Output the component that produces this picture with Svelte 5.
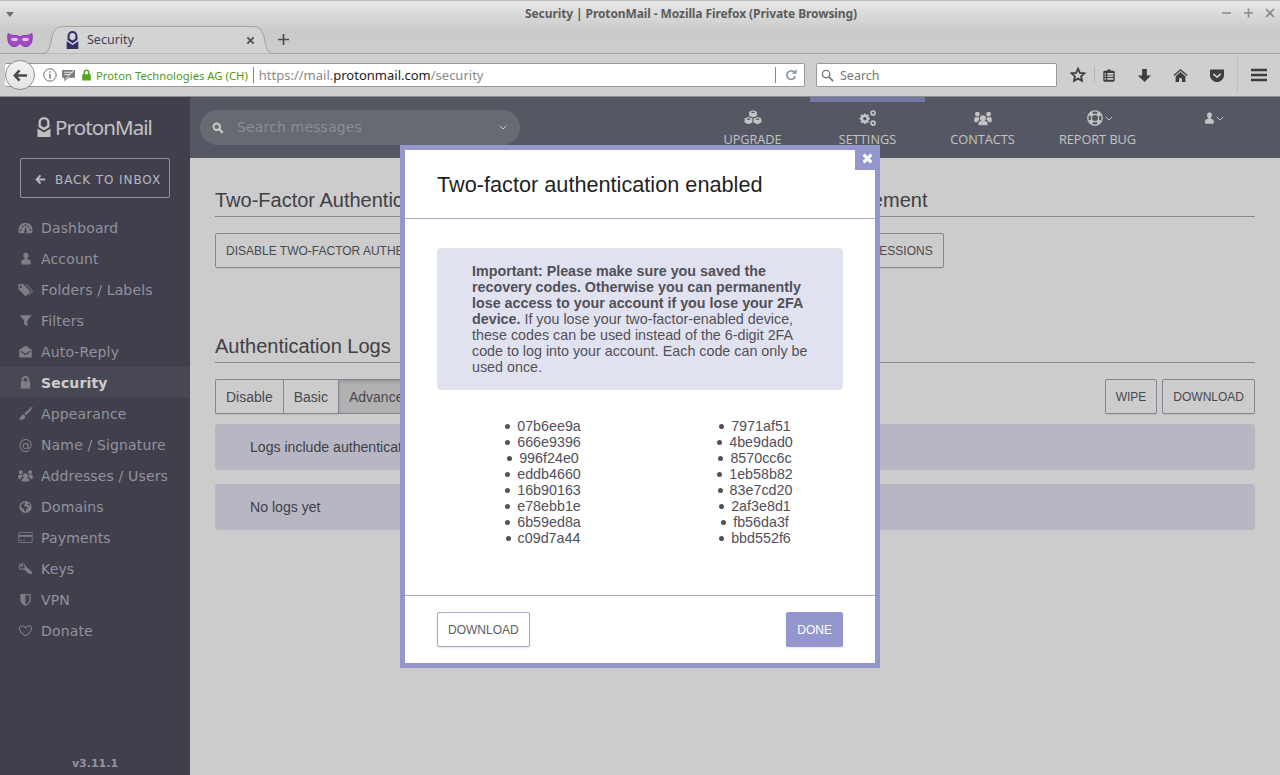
<script>
  const nav = [
    { label: 'Dashboard', icon: 'dash' },
    { label: 'Account', icon: 'user' },
    { label: 'Folders / Labels', icon: 'tags' },
    { label: 'Filters', icon: 'filter' },
    { label: 'Auto-Reply', icon: 'mail' },
    { label: 'Security', icon: 'lock', active: true },
    { label: 'Appearance', icon: 'brush' },
    { label: 'Name / Signature', icon: 'at' },
    { label: 'Addresses / Users', icon: 'users' },
    { label: 'Domains', icon: 'globe' },
    { label: 'Payments', icon: 'card' },
    { label: 'Keys', icon: 'key' },
    { label: 'VPN', icon: 'shield' },
    { label: 'Donate', icon: 'heart' }
  ];
  const icons = {
    dash: 'M8 3a7.5 7.5 0 0 0-7.5 7.5c0 1.3.3 2.5.9 3.5h13.2c.6-1 .9-2.2.9-3.5A7.5 7.5 0 0 0 8 3zM3 9.5a1 1 0 1 1 0 2 1 1 0 0 1 0-2zM5 6a1 1 0 1 1 0 2 1 1 0 0 1 0-2zM8 4.5a1 1 0 1 1 0 2 1 1 0 0 1 0-2zM11 6a1 1 0 1 1 0 2 1 1 0 0 1 0-2zM13 9.5a1 1 0 1 1 0 2 1 1 0 0 1 0-2zM7.6 8h.8l.5 3.3a1.4 1.4 0 1 1-1.8 0z',
    user: 'M8 1.5a3.2 3.2 0 0 1 3.2 3.6c-.1 1.4-.8 2.6-1.7 3.1l3 1.5c.7.4 1 1 1 1.8v2c0 .6-.4 1-1 1H4.5c-.6 0-1-.4-1-1v-2c0-.8.3-1.4 1-1.8l3-1.5c-.9-.5-1.6-1.7-1.7-3.1A3.2 3.2 0 0 1 8 1.5z',
    tags: 'M.5 2.5h5.2l7 7c.4.4.4 1 0 1.4l-3.8 3.8c-.4.4-1 .4-1.4 0l-7-7zM3 4a1.2 1.2 0 1 0 0 2.4A1.2 1.2 0 0 0 3 4zM8 2.5h1.3l6.2 6.6c.4.4.4 1 0 1.4l-3.8 4-.6-.6 3.2-3.4c.4-.4.4-1 0-1.4z',
    filter: 'M2 2.5h12.5L10 8v6.5L6.5 12V8z',
    mail: 'M8 1.5l6.7 5v7.3c0 .4-.3.7-.7.7H2c-.4 0-.7-.3-.7-.7V6.500zM3 7.200l-.7.9L8 12l5.700-3.900-.7-.9L8 10.500z',
    lock: 'M4 7V5a4 4 0 0 1 8 0v2h.5c.3 0 .5.200.5.500v6.500c0 .3-.200.500-.5.500h-9c-.3 0-.5-.200-.5-.500V7.500c0-.3.200-.500.500-.500zM6 7h4V5a2 2 0 0 0-4 0z',
    brush: 'M15.500 .8c.3.300-.2 1.200-1 2.300C12.800 5.500 10 8.500 8.500 9.800L6.700 8.200C8 6.500 11 3.800 13.300 2 14.400 1.200 15.200.5 15.500.8zM6 9l1.800 1.600c0 2.400-1.500 4-4 4-1.300 0-2.400-.5-3.300-1.400 1.200 0 1.800-.3 2.200-1.300C3.300 10.500 4.500 9.300 6 9z',
    users: 'M8 5.500a2.600 2.600 0 0 1 2.600 2.700c0 1-.5 1.800-1.200 2.200l2.100 1c.4.200.6.600.6 1v1.300c0 .4-.3.700-.7.700H4.600c-.4 0-.7-.3-.7-.7v-1.300c0-.4.2-.8.6-1l2.100-1A2.600 2.600 0 0 1 8 5.500zM3 2.500a2.100 2.100 0 1 1 0 4.200 2.100 2.100 0 0 1 0-4.200zM13 2.500a2.100 2.100 0 1 1 0 4.200 2.100 2.100 0 0 1 0-4.200zM.3 8.300c0-.5.4-1 1-1H4.700c-.3.700-.2 1.700.2 2.400-1 .4-1.800 1-2 2H1c-.4 0-.7-.3-.7-.7zM15.700 8.300c0-.5-.4-1-1-1H11.300c.3.700.2 1.700-.2 2.400 1 .4 1.800 1 2 2H15c.4 0 .7-.3.7-.7z',
    globe: 'M8 2a6.500 6.500 0 1 1 0 13A6.500 6.500 0 0 1 8 2zM4 5.500c-.6.800-1 1.700-1 2.800l2.500 2 1 .2v2l1.500 1 .6-2 2-2-1.500-1.500H7L6 7l1.500-1.500V4C6 4 4.800 4.600 4 5.500zM11 4.500l-.8 1.500 1.800 1.300 1.200-.3C12.800 6 12 5 11 4.500z',
    card: 'M1.500 2.500h13c.6 0 1 .4 1 1v9c0 .6-.4 1-1 1h-13c-.6 0-1-.4-1-1v-9c0-.6.4-1 1-1zM1.300 3.300v1.900h13.400V3.300zM1.300 7.300v5.400h13.400V7.300zM2.500 10.800h2v.8h-2zM5.500 10.800h2v.8h-2z',
    key: 'M4.500 2.500a3.800 3.800 0 0 1 3.700 2.900L9 6.500l6.200 5.300-.3 1.800-1.300.2-.8-.7-.5.8-1-.2-.2-1-.8-.2L6.800 9c-.7.300-1.400.4-2.300.3A3.500 3.500 0 0 1 .8 6c0-2 1.700-3.500 3.700-3.500zM4 4a1 1 0 1 0 0 2.500A1 1 0 0 0 4 4zM4.500 3.500C3 3.500 1.800 4.600 1.800 6s1.200 2.300 2.700 2.300S7.200 7.200 7.200 5.900 6 3.500 4.500 3.500z',
    shield: 'M2.500 2h11v6.500c0 3-2.500 5-5.500 6.500-3-1.500-5.500-3.500-5.500-6.500zM8 3.500v10c2-1.200 4-2.600 4-5V3.500z',
    heart: 'M8 14.500C4.500 11.700 1 9 1 5.800 1 3.700 2.500 2.500 4.300 2.500 5.800 2.500 7.200 3.400 8 4.800 8.800 3.400 10.200 2.500 11.700 2.500 13.500 2.500 15 3.700 15 5.800c0 3.200-3.500 5.900-7 8.700zM8 13.300c3-2.400 6-4.800 6-7.500 0-1.500-1-2.400-2.300-2.400-1.500 0-2.900 1.200-3.700 3-.8-1.800-2.200-3-3.700-3C3 3.400 2 4.300 2 5.800c0 2.700 3 5.100 6 7.500z',
    cubes: 'M8 1l3.500 1.500V6L8 7.500 4.500 6V2.500zM4 7l3.500 1.500V12L4 13.500.5 12V8.500zM12 7l3.500 1.500V12L12 13.500 8.500 12V8.500zM8 2.200 6 3l2 .8 2-.8zM4 8.200 2 9l2 .8L6 9zM12 8.200 10 9l2 .8 2-.8z',
    gears: 'M6 5l1 .3.8-.7 1.200 1.200-.7.800.3 1 1.100.2v1.600l-1.100.2-.3 1 .7.800L8 12.600l-.8-.7-1 .3-.2 1.100H4.400l-.2-1.100-1-.3-.8.7L1.200 11.400l.7-.8-.3-1-1.100-.2V7.800l1.100-.2.3-1-.7-.8L2.400 4.600l.8.7 1-.3.2-1.100H6zM5.200 7a1.600 1.600 0 1 0 0 3.200 1.600 1.600 0 0 0 0-3.200zM12.500 1a2.500 2.500 0 1 1 0 5 2.500 2.500 0 0 1 0-5zM12.500 2.500a1 1 0 1 0 0 2 1 1 0 0 0 0-2zM12.500 10a2.500 2.500 0 1 1 0 5 2.500 2.500 0 0 1 0-5zM12.500 11.500a1 1 0 1 0 0 2 1 1 0 0 0 0-2z',
    ring: 'M8 1a7 7 0 1 1 0 14A7 7 0 0 1 8 1zM8 5.300a2.700 2.700 0 1 0 0 5.400 2.700 2.700 0 0 0 0-5.400zM5.700 2.600 6.400 4.500c1-.4 2.200-.4 3.200 0l.7-1.900a7 7 0 0 0-4.600 0zM5.700 13.400l.7-1.900c1 .4 2.200.4 3.200 0l.7 1.900a7 7 0 0 1-4.600 0zM2.600 5.700l1.900.7c-.4 1-.4 2.200 0 3.200l-1.900.7a7 7 0 0 1 0-4.600zM13.400 5.700l-1.900.7c.4 1 .4 2.200 0 3.200l1.900.7a7 7 0 0 0 0-4.600z'
  };
  const left = ['07b6ee9a','666e9396','996f24e0','eddb4660','16b90163','e78ebb1e','6b59ed8a','c09d7a44'];
  const right = ['7971af51','4be9dad0','8570cc6c','1eb58b82','83e7cd20','2af3e8d1','fb56da3f','bbd552f6'];
</script>

{#snippet icon(name, cls)}
  <svg class={cls} viewBox="0 0 16 16" aria-hidden="true"><path fill="currentColor" fill-rule="evenodd" d={icons[name]} /></svg>
{/snippet}

{#snippet chev()}
  <svg class="chev" viewBox="0 0 8 5" aria-hidden="true"><path d="M.7.8 4 4l3.300-3.200" fill="none" stroke="currentColor" stroke-width="1" /></svg>
{/snippet}

{#snippet proton(cls)}
  <svg class={cls} viewBox="0 0 14 20" aria-hidden="true"><path fill="currentColor" fill-rule="evenodd" d="M7 0a5.500 5.500 0 0 1 5.500 5.500V10l-5.500 3.500L1.500 10V5.500A5.500 5.500 0 0 1 7 0zM7 2.300A3.200 3.200 0 0 0 3.800 5.500V8.500L7 10.500l3.200-2V5.500A3.200 3.200 0 0 0 7 2.300zM.5 11.500 7 15.500l6.500-4V20H.5z" /></svg>
{/snippet}

<div class="window">
  <header class="browser">
    <div class="titlebar">
      <span class="menu-tri"></span>
      <span class="title">Security | ProtonMail - Mozilla Firefox (Private Browsing)</span>
      <div class="winctl">
        <svg viewBox="0 0 58 12" aria-hidden="true"><path d="M2 6h9M24 6h9M28.500 1.500v9M46 2l8 8M54 2l-8 8" stroke="#8b8b8b" stroke-width="1.600" fill="none" /></svg>
      </div>
    </div>
    <div class="tabbar">
      <svg class="mask" viewBox="0 0 26 16" aria-hidden="true">
        <path fill="#a04bc4" stroke="#7a2ea0" stroke-width=".8" d="M1 1.500c3 1.500 4 2 7 2 2.500 0 3.800.6 5 1.300 1.200-.7 2.500-1.300 5-1.300 3 0 4-.5 7-2 .6 5 .2 8-1 10-1.200 2-3.500 3.300-6 3-2-.2-3.200-1.500-5-3-1.800 1.500-3 2.800-5 3-2.500.3-4.800-1-6-3-1.200-2-1.600-5-1-10z" />
        <ellipse cx="7.500" cy="7.500" rx="3.400" ry="1.700" fill="#e3c4ef" />
        <ellipse cx="18.500" cy="7.500" rx="3.400" ry="1.700" fill="#e3c4ef" />
      </svg>
      <div class="tab">
        <svg class="tab-shape" viewBox="0 0 232 28" aria-hidden="true"><path d="M0 27.500c6 0 7-3 9-12C11 5 13 .5 22 .5h188c9 0 11 4.500 13 15 2 9 3 12 9 12" fill="#d3d3d3" stroke="#a2a2a2" /></svg>
        {@render proton('favicon')}
        <span class="tab-title">Security</span>
        <svg class="tab-x" viewBox="0 0 10 10" aria-hidden="true"><path d="M1.500 1.500l7 7M8.500 1.500l-7 7" stroke="#555" stroke-width="2.200" /></svg>
      </div>
      <svg class="plus" viewBox="0 0 14 14" aria-hidden="true"><path d="M7 1v12M1 7h12" stroke="#4a4a4a" stroke-width="1.800" /></svg>
    </div>
    <div class="navbar">
      <div class="urlbar">
        <div class="backbtn">
          <svg viewBox="0 0 16 14" aria-hidden="true"><path d="M7 1.500 2 7l5 5.500M2.500 7H15" fill="none" stroke="#4a4a4a" stroke-width="2.800" /></svg>
        </div>
        <svg class="u-info" viewBox="0 0 14 14" aria-hidden="true"><circle cx="7" cy="7" r="6.200" fill="none" stroke="#707070" /><path d="M7 6v4.500M7 3.200v1.600" stroke="#707070" stroke-width="1.400" /></svg>
        <svg class="u-msg" viewBox="0 0 16 14" aria-hidden="true"><path d="M1 1h14v8.500H8L3.500 13.500V9.500H1z" fill="#7c7c7c" /><path d="M3.500 3.500h9M3.500 6h6M14 1 5 11" stroke="#f4f4f4" stroke-width="1" /></svg>
        <svg class="u-lock" viewBox="0 0 12 14" aria-hidden="true"><path fill="#54a61e" fill-rule="evenodd" d="M2.500 6V4a3.500 3.500 0 0 1 7 0v2h1.500v7.500H1V6zM4.300 6h3.400V4a1.700 1.700 0 0 0-3.400 0z" /></svg>
        <span class="org">Proton Technologies AG (CH)</span>
        <span class="u-sep"></span>
        <span class="url"><span class="dim">https://mail.</span>protonmail.com<span class="dim">/security</span></span>
        <span class="u-sep2"></span>
        <svg class="u-reload" viewBox="0 0 14 14" aria-hidden="true"><path d="M11.500 4.500A5 5 0 1 0 12 8.500" fill="none" stroke="#8594a5" stroke-width="2" /><path d="M8 5.500h5.500V0z" fill="#8594a5" /></svg>
      </div>
      <div class="searchbar">
        <svg viewBox="0 0 14 14" aria-hidden="true"><circle cx="5.500" cy="5.500" r="4" fill="none" stroke="#7a7a7a" stroke-width="1.500" /><path d="M8.500 8.500l4.500 4.500" stroke="#7a7a7a" stroke-width="2" /></svg>
        <span>Search</span>
      </div>
      <div class="tools">
        <svg class="t-star" viewBox="0 0 16 16" aria-hidden="true"><path d="M8 1.700l1.900 4.100 4.500.5-3.300 3 .9 4.500L8 11.600l-4 2.200.9-4.500-3.300-3 4.500-.5z" fill="none" stroke="#3e3e3e" stroke-width="1.800" /></svg>
        <span class="t-div"></span>
        <svg class="t-list" viewBox="0 0 16 16" aria-hidden="true"><path fill="#3e3e3e" fill-rule="evenodd" d="M6 1h4v1.500h3c.8 0 1.500.7 1.500 1.500v9.500c0 .8-.7 1.500-1.500 1.500H3c-.8 0-1.500-.7-1.500-1.500V4c0-.8.7-1.500 1.500-1.500h3zM3 5v2h1.500V5zM6 5v2h7V5zM3 8v1.800h1.500V8zM6 8v1.800h7V8zM3 10.800v2h1.500v-2zM6 10.800v2h7v-2z" /></svg>
        <svg class="t-down" viewBox="0 0 16 16" aria-hidden="true"><path fill="#3e3e3e" d="M5.500 1h5v7H15l-7 7-7-7h4.500z" /></svg>
        <svg class="t-home" viewBox="0 0 16 16" aria-hidden="true"><path fill="#3e3e3e" d="M8 1 .5 7.500l.8.9L8 2.800l6.700 5.600.8-.9zM8 4.300 2.800 8.700V15h3.700v-4h3v4h3.700V8.700z" /></svg>
        <svg class="t-pocket" viewBox="0 0 16 16" aria-hidden="true"><path fill="#3e3e3e" fill-rule="evenodd" d="M1.500 1.500h13c.6 0 1 .4 1 1v5C15.500 11.600 12 15 8 15S.5 11.600.5 7.500v-5c0-.6.4-1 1-1zM4.700 5.500 3.500 6.800 8 11l4.500-4.200-1.200-1.300L8 8.600z" /></svg>
        <span class="t-div2"></span>
        <svg class="t-burger" viewBox="0 0 16 14" aria-hidden="true"><path d="M0 2h16M0 7h16M0 12h16" stroke="#3e3e3e" stroke-width="2.600" /></svg>
      </div>
    </div>
  </header>

  <div class="page">
    <aside class="sidebar">
      <div class="logo">
        {@render proton('logo-mark')}
        <span class="logo-text">ProtonMail</span>
      </div>
      <div class="back">
        <svg viewBox="0 0 12 12" aria-hidden="true"><path d="M6 1.500 1.800 6 6 10.500M2.500 6h8.500" fill="none" stroke="currentColor" stroke-width="2.200" /></svg>
        <span>BACK TO INBOX</span>
      </div>
      <nav class="menu">
        {#each nav as item}
          <div class="menu-item" class:active={item.active}>
            <span class="menu-icon">
              {#if item.icon === 'at'}
                <span class="at">@</span>
              {:else}
                {@render icon(item.icon, 'micon')}
              {/if}
            </span>
            <span>{item.label}</span>
          </div>
        {/each}
      </nav>
      <div class="version">v3.11.1</div>
    </aside>

    <div class="content">
      <div class="topbar">
        <div class="search">
          <svg viewBox="0 0 14 14" aria-hidden="true"><circle cx="5.500" cy="5.500" r="3.800" fill="none" stroke="currentColor" stroke-width="2.200" /><path d="M8.500 8.500l4 4" stroke="currentColor" stroke-width="2.600" /></svg>
          <span class="s-text">Search messages</span>
          {@render chev()}
        </div>
        <div class="topnav">
          <div class="top-item">{@render icon('cubes', 'ticon')}<span>UPGRADE</span></div>
          <div class="top-item current">{@render icon('gears', 'ticon')}<span>SETTINGS</span></div>
          <div class="top-item">{@render icon('users', 'ticon')}<span>CONTACTS</span></div>
          <div class="top-item"><div class="ti-row">{@render icon('ring', 'ticon')}{@render chev()}</div><span>REPORT BUG</span></div>
          <div class="top-item"><div class="ti-row me">{@render icon('user', 'ticon')}{@render chev()}</div><span>&nbsp;</span></div>
        </div>
      </div>
      <main class="main">
        <div class="cols">
          <section>
            <h2>Two-Factor Authentication</h2>
            <button class="btn">DISABLE TWO-FACTOR AUTHENTICATION</button>
          </section>
          <section>
            <h2>Session Management</h2>
            <button class="btn sessions">MANAGE LOGGED IN SESSIONS</button>
          </section>
        </div>
        <section class="logs">
          <h2>Authentication Logs</h2>
          <div class="log-actions">
            <div class="group">
              <button class="btn">Disable</button><button class="btn">Basic</button><button class="btn on">Advanced</button>
            </div>
            <div class="pair">
              <button class="btn">WIPE</button>
              <button class="btn">DOWNLOAD</button>
            </div>
          </div>
          <div class="bar">Logs include authentication attempts for your account.</div>
          <div class="bar">No logs yet</div>
        </section>
      </main>
    </div>

    <div class="overlay">
      <div class="modal">
        <button class="close" aria-label="Close">
          <svg viewBox="0 0 10 10" aria-hidden="true"><path d="M1.500 1.500l7 7M8.500 1.500l-7 7" stroke="#fff" stroke-width="2.800" /></svg>
        </button>
        <div class="m-head">Two-factor authentication enabled</div>
        <div class="m-body">
          <div class="notice">
            <strong>Important: Please make sure you saved the recovery codes. Otherwise you can permanently lose access to your account if you lose your 2FA device.</strong>
            If you lose your two-factor-enabled device, these codes can be used instead of the 6-digit 2FA code to log into your account. Each code can only be used once.
          </div>
          <div class="codes">
            <ul>{#each left as c}<li>{c}</li>{/each}</ul>
            <ul>{#each right as c}<li>{c}</li>{/each}</ul>
          </div>
        </div>
        <div class="m-foot">
          <button class="mbtn">DOWNLOAD</button>
          <button class="mbtn primary">DONE</button>
        </div>
      </div>
    </div>
  </div>
</div>

<style>
  :global(body) { margin: 0; background: #fff; }
  .window { width: 1280px; height: 775px; overflow: hidden; display: flex; flex-direction: column; font-family: "Liberation Sans", Arial, sans-serif; }
  svg { display: block; flex: none; }
  button { font-family: inherit; margin: 0; }

  .browser { height: 97px; flex: none; display: flex; flex-direction: column; background: linear-gradient(#e6e6e6 2px, #d9d9d9 14px, #cacaca 30px, #cdcdcd 53px); border-top: 1px solid #bbb; box-sizing: border-box; font-family: "Noto Sans", "Open Sans", sans-serif; }
  .titlebar { height: 25px; position: relative; display: flex; align-items: center; justify-content: center; }
  .title { font-size: 12px; font-weight: 700; color: #5c5c5c; margin-left: 102px; letter-spacing: -.1px; }
  .menu-tri { position: absolute; left: 6px; top: 11px; border: 4px solid transparent; border-top: 5px solid #6e6e6e; border-bottom: 0; }
  .winctl { position: absolute; right: 2px; top: 6px; }
  .winctl svg { width: 58px; height: 12px; }
  .tabbar { height: 27px; display: flex; align-items: flex-end; position: relative; }
  .mask { width: 26px; height: 16px; margin: 0 0 5px 7px; }
  .tab { position: relative; width: 232px; height: 28px; margin-left: 9px; display: flex; align-items: center; margin-bottom: -1px; z-index: 1; }
  .tab-shape { position: absolute; left: 0; top: 0; width: 232px; height: 28px; }
  .favicon { position: relative; width: 13px; height: 18px; color: #2e3068; margin-left: 24px; }
  .tab-title { position: relative; font-size: 12.500px; color: #43434d; margin-left: 8px; margin-bottom: 2px; flex: 1; }
  .tab-x { position: relative; width: 9px; height: 9px; margin-right: 19px; }
  .plus { width: 13px; height: 13px; margin: 0 0 7px 3px; }
  .navbar { height: 44px; flex: none; box-sizing: border-box; border-top: 1px solid #a2a2a2; border-bottom: 1px solid #8c8c8c; background: #cfcfcf; display: flex; align-items: center; padding-left: 5px; }
  .urlbar { position: relative; width: 800px; height: 24px; box-sizing: border-box; display: flex; align-items: center; background: #fff; border: 1px solid #9a9a9a; border-radius: 2px; border-left: 0; padding-left: 34px; }
  .backbtn { position: absolute; left: 0; top: -4px; width: 30px; height: 30px; box-sizing: border-box; border-radius: 50%; border: 1px solid #8e8e8e; background: linear-gradient(#f2f2f2, #e4e4e4); display: flex; align-items: center; justify-content: center; }
  .backbtn svg { width: 15px; height: 13px; }
  .u-info { width: 14px; height: 14px; margin-left: 4px; }
  .u-msg { width: 15px; height: 13px; margin-left: 4px; }
  .u-lock { width: 11px; height: 12px; margin-left: 5px; }
  .org { font-size: 11.300px; color: #4f9a0c; margin-left: 4px; white-space: nowrap; }
  .u-sep { width: 1px; height: 16px; background: #8a8a8a; margin: 0 5px 0 5px; }
  .url { font-size: 13px; color: #1c1c1c; white-space: nowrap; flex: 1; }
  .dim { color: #8a8a8a; }
  .u-sep2 { width: 1px; height: 16px; background: #8a8a8a; }
  .u-reload { width: 12px; height: 12px; margin: 0 7px 0 9px; }
  .searchbar { margin-left: 11px; width: 241px; height: 24px; box-sizing: border-box; background: #fff; border: 1px solid #9a9a9a; border-radius: 2px; display: flex; align-items: center; gap: 6px; padding-left: 4px; font-size: 12.500px; color: #777; }
  .searchbar svg { width: 13px; height: 13px; }
  .tools { flex: 1; display: flex; align-items: center; position: relative; height: 100%; padding-left: 13px; }
  .t-star { width: 16px; height: 16px; }
  .t-div { width: 1px; height: 16px; background: #b5b5b5; margin: 0 7px 0 8px; }
  .t-list { width: 14px; height: 15px; }
  .t-down { width: 15px; height: 15px; margin-left: 21px; }
  .t-home { width: 15px; height: 15px; margin-left: 21px; }
  .t-pocket { width: 16px; height: 15px; margin-left: 21px; }
  .t-div2 { width: 1px; height: 36px; background: #bdbdbd; margin: 0 13px 0 12px; }
  .t-burger { width: 16px; height: 14px; }

  .page { flex: 1; position: relative; display: flex; min-height: 0; }
  .sidebar { width: 190px; flex: none; background: #504f5e; color: #b6b7c4; display: flex; flex-direction: column; font-family: "DejaVu Sans", sans-serif; }
  .logo { height: 61px; box-sizing: border-box; display: flex; align-items: center; padding: 0 0 2px 37px; gap: 4px; color: #f2f2f2; }
  .logo-mark { width: 14px; height: 20px; }
  .logo-text { font-family: "Noto Sans", sans-serif; font-size: 20.500px; letter-spacing: -.9px; }
  .back { margin-left: 20px; width: 150px; height: 40px; box-sizing: border-box; border: 1px solid #b6b7c4; border-radius: 2px; display: flex; align-items: center; padding: 3px 0 0 14px; gap: 9px; font-size: 12px; letter-spacing: .9px; color: #e0e2ee; white-space: nowrap; }
  .back svg { width: 11px; height: 11px; }
  .menu { margin-top: 14px; }
  .menu-item { height: 31px; display: flex; align-items: center; font-size: 14px; letter-spacing: .15px; color: #b6b7c4; }
  .menu-item.active { background: #5b5a69; color: #fff; font-weight: 700; }
  .menu-icon { width: 15px; margin-left: 18px; margin-right: 8px; display: flex; justify-content: center; color: #9e9eaa; }
  .micon { width: 15px; height: 15px; }
  .at { font-size: 14px; }
  .version { margin-top: auto; text-align: center; font-size: 11px; font-weight: 700; padding-bottom: 5px; color: #b6b7c4; }

  .content { flex: 1; min-width: 0; display: flex; flex-direction: column; }
  .topbar { height: 61px; flex: none; background: #6a6e7c; display: flex; color: #e6e6e6; }
  .search { position: relative; margin: 13px 0 0 10px; width: 320px; height: 35px; box-sizing: border-box; border-radius: 18px; background: #82858f; display: flex; align-items: center; padding: 0 13px 0 12px; color: #fff; font-family: "DejaVu Sans", sans-serif; }
  .search svg:first-child { width: 12px; height: 12px; }
  .s-text { margin-left: 13px; font-size: 14px; letter-spacing: .15px; color: #aeb0ba; flex: 1; margin-bottom: 2px; }
  .chev { width: 8px; height: 5px; }
  .topnav { margin-left: auto; display: flex; margin-right: 10px; }
  .top-item { width: 115px; box-sizing: border-box; padding-top: 12px; display: flex; flex-direction: column; align-items: center; font-family: "Open Sans", sans-serif; font-size: 12.700px; color: #f4f4f4; }
  .top-item > span { margin-top: 4px; line-height: 16px; }
  .top-item.current { box-shadow: inset 0 5px 0 #9397cd; }
  .ti-row { display: flex; align-items: center; height: 18px; margin-left: 3px; }
  .ti-row.me { margin-left: 0; }
  .ti-row.me .ticon { width: 14px; }
  .ticon { width: 20px; height: 18px; }

  .main { flex: 1; background: #fff; padding: 26px 25px 0; color: #505058; }
  .cols { display: grid; grid-template-columns: 499px 1fr; gap: 20px; }
  h2 { margin: 0; font-size: 20px; font-weight: 400; line-height: 32px; height: 32px; border-bottom: 1px solid #a8a8b8; color: #505058; }
  .btn { height: 35px; box-sizing: border-box; padding: 0 10px; font-size: 12px; color: #5c5c66; background: #fff; border: 1px solid #a8a8b8; border-radius: 2px; white-space: nowrap; box-shadow: 0 1px 1px rgba(0,0,0,.08); }
  .cols .btn { margin-top: 16px; }
  .cols .sessions { padding-left: 11px; }
  .logs { margin-top: 62px; }
  .log-actions { display: flex; justify-content: space-between; margin-top: 16px; }
  .group { display: flex; }
  .group .btn { font-size: 14px; border-radius: 0; border-right: 0; }
  .group .btn:first-child { border-radius: 2px 0 0 2px; }
  .group .on { background: #dedede; box-shadow: inset 0 2px 3px rgba(0,0,0,.15); }
  .pair { display: flex; gap: 5px; }
  .bar { margin-top: 10px; height: 46px; box-sizing: border-box; padding: 0 35px; display: flex; align-items: center; font-size: 14.100px; background: #e5e5f6; border-radius: 4px; color: #505058; }
  .bar + .bar { margin-top: 14px; }

  .overlay { position: absolute; inset: 0; background: rgba(0,0,0,.2); display: flex; justify-content: center; align-items: flex-start; padding-top: 48px; box-sizing: border-box; }
  .modal { position: relative; width: 480px; height: 523px; box-sizing: border-box; background: #fff; border: 5px solid #9397cd; display: flex; flex-direction: column; }
  .close { position: absolute; right: 0; top: 0; width: 20px; height: 20px; padding: 0 0 4px 5px; box-sizing: border-box; background: #9397cd; border: 0; display: flex; align-items: center; justify-content: center; }
  .close svg { width: 11px; height: 11px; }
  .m-head { height: 69px; flex: none; box-sizing: border-box; border-bottom: 1px solid #a9abc4; padding: 2px 32px 0; display: flex; align-items: center; font-size: 21.700px; color: #1f1f26; }
  .m-body { flex: 1; padding: 29px 32px 0; }
  .notice { background: #e1e2f0; border-radius: 4px; padding: 15px 35px; font-size: 14.300px; line-height: 16px; color: #505058; }
  .notice strong { font-weight: 700; }
  .codes { display: grid; grid-template-columns: 180px 180px; column-gap: 32px; padding-left: 16px; margin-top: 28px; }
  ul { margin: 0; padding: 0; list-style: none; text-align: center; font-size: 14.300px; line-height: 16px; color: #505058; }
  li::before { content: ""; display: inline-block; width: 5px; height: 5px; border-radius: 50%; background: #505058; margin-right: 7px; vertical-align: 2px; }
  .m-foot { height: 68px; flex: none; box-sizing: border-box; border-top: 1px solid #a9a9bd; padding: 16px 32px; display: flex; justify-content: space-between; }
  .mbtn { height: 35px; box-sizing: border-box; padding: 0 10px; font-size: 12px; color: #5c5c66; background: #fff; border: 1px solid #a8a8c0; border-radius: 2px; box-shadow: 0 1px 2px rgba(0,0,0,.1); }
  .mbtn.primary { background: #9397cd; border-color: #9397cd; color: #fff; }
</style>
